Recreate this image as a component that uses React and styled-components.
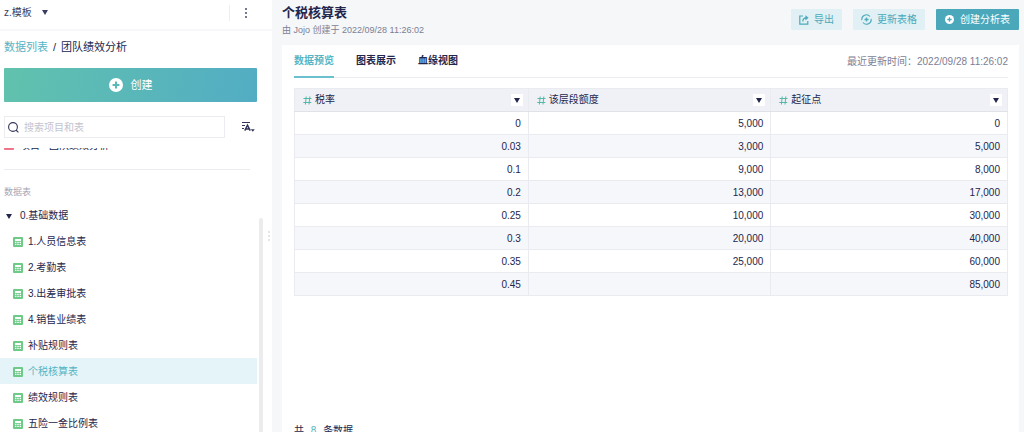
import React, { useState } from "react";
import styled, { createGlobalStyle } from "styled-components";

const GlobalStyle = createGlobalStyle`
  * {
    box-sizing: border-box;
  }
  body {
    margin: 0;
    background: #ffffff;
    color: #23264d;
    font-family: "Liberation Sans", "Noto Sans CJK SC", sans-serif;
    font-size: 10px;
    line-height: 16px;
  }
  button,
  input {
    font-family: inherit;
    font-size: inherit;
    line-height: inherit;
    color: inherit;
    border: none;
    padding: 0;
    background: none;
  }
  a {
    color: inherit;
    text-decoration: none;
  }
  svg {
    display: block;
    flex: none;
  }
`;

const Page = styled.div`
  display: grid;
  grid-template-columns: 264px 8px 1fr;
  height: 100vh;
  overflow: hidden;
`;

const Sidebar = styled.aside`
  display: flex;
  flex-direction: column;
  min-height: 0;
`;

const TopBar = styled.div`
  display: flex;
  align-items: center;
  justify-content: space-between;
  height: 31px;
  margin-right: -8px;
  padding: 0 24px 4px 4px;
  border-bottom: 2px solid #f7f7f9;
`;

const ProjectButton = styled.button`
  display: flex;
  align-items: center;
  gap: 10px;
  color: #3b3e60;
`;

const MoreButton = styled.button`
  display: flex;
  align-items: center;
  height: 16px;
  padding-left: 14px;
  border-left: 1px solid #eeeef2;
`;

const Breadcrumb = styled.nav`
  display: flex;
  gap: 5px;
  padding: 8px 4px;
  font-size: 11px;

  a {
    color: #55b3c5;
  }
`;

const CreateButton = styled.button`
  display: flex;
  align-items: center;
  justify-content: center;
  gap: 8px;
  height: 34px;
  margin: 5px 7px 0 4px;
  border-radius: 1px;
  color: #ffffff;
  font-size: 11px;
  background: linear-gradient(100deg, #61c2ad, #52adc4);
`;

const SearchRow = styled.div`
  display: flex;
  align-items: center;
  gap: 16px;
  padding: 14px 9px 10px 4px;
`;

const SearchBox = styled.label`
  display: flex;
  flex: 1;
  align-items: center;
  gap: 5px;
  height: 22px;
  padding: 1px 3px 0;
  border: 1px solid #ececf0;

  input {
    flex: 1;
    min-width: 0;
    outline: none;
  }
  input::placeholder {
    color: #c3c4cf;
  }
`;

const Scroller = styled.div`
  display: flex;
  flex: 1;
  flex-direction: column;
  min-height: 0;
  overflow: hidden;
`;

const Projects = styled.div`
  display: flex;
  align-items: flex-end;
  flex: none;
  height: 3px;
  overflow: hidden;
  padding-left: 4px;
`;

const ProjectLink = styled.a`
  display: flex;
  align-items: center;
  gap: 6px;
  line-height: 10px;
`;

const Divider = styled.hr`
  width: calc(100% - 18px);
  margin: 18px 0 0 4px;
  border: none;
  border-top: 1px solid #ececf0;
`;

const TreeArea = styled.div`
  display: flex;
  flex: 1;
  min-height: 0;
  justify-content: space-between;
`;

const Tree = styled.div`
  flex: 1;
  min-width: 0;
`;

const TreeLabel = styled.div`
  padding: 14px 4px 2px;
  font-size: 9px;
  color: #a5a6b6;
`;

const GroupButton = styled.button`
  display: flex;
  align-items: center;
  gap: 8px;
  width: 100%;
  height: 26px;
  padding: 2px 0 0 6px;
`;

const TreeItem = styled.a`
  display: flex;
  align-items: center;
  gap: 5px;
  height: 26px;
  padding: 1px 0 0 13px;
  color: ${(props) => (props.$active ? "#55b5c5" : "#23264d")};
  background: ${(props) => (props.$active ? "#e5f4f8" : "none")};
`;

const ScrollTrack = styled.div`
  width: 7px;
  padding: 48px 1px 0 2px;
`;

const ScrollThumb = styled.div`
  height: 100%;
  border-radius: 2px 2px 0 0;
  background: #ececee;
`;

const Resizer = styled.div`
  display: flex;
  align-items: center;
  justify-content: flex-end;
  padding: 40px 1px 0 0;
`;

const Main = styled.main`
  display: flex;
  flex-direction: column;
  min-width: 0;
  min-height: 0;
  padding: 4px 5px 0 10px;
  background: #f5f7f9;
`;

const Header = styled.header`
  display: flex;
  align-items: flex-start;
  justify-content: space-between;
  height: 41px;
`;

const Title = styled.h1`
  margin: 0;
  font-size: 13px;
  font-weight: 700;
  line-height: 18px;
`;

const Subtitle = styled.p`
  margin: 0;
  font-size: 9px;
  color: #7c7e95;
`;

const Actions = styled.div`
  display: flex;
  gap: 11px;
  padding-top: 5px;
`;

const ActionButton = styled.button`
  display: flex;
  align-items: center;
  gap: ${(props) => (props.$primary ? "6px" : "5px")};
  height: 21px;
  padding: 0 ${(props) => (props.$primary ? "9px" : "8px")};
  border-radius: 1px;
  color: ${(props) => (props.$primary ? "#ffffff" : "#4ba9bb")};
  background: ${(props) => (props.$primary ? "#4ba8bb" : "#e0f0f4")};
`;

const Panel = styled.section`
  display: flex;
  flex: 1;
  flex-direction: column;
  min-height: 0;
  padding: 0 11px 0 12px;
  background: #ffffff;
`;

const TabBar = styled.div`
  display: flex;
  align-items: center;
  justify-content: space-between;
  height: 33px;
  border-bottom: 1px solid #ededf1;
`;

const Tabs = styled.div`
  display: flex;
  gap: 22px;
`;

const Tab = styled.button`
  height: 33px;
  padding-top: 2px;
  font-weight: 700;
  color: ${(props) => (props.$active ? "#55b5c5" : "#23264d")};
  border-bottom: 2px solid ${(props) => (props.$active ? "#6bc0cd" : "transparent")};
`;

const Updated = styled.span`
  padding-top: 2px;
  color: #7c7e95;
`;

const Table = styled.table`
  width: 100%;
  margin-top: 10px;
  border-collapse: collapse;
  table-layout: fixed;

  th,
  td {
    border: 1px solid #e9ebf0;
  }
  th {
    height: 23px;
    padding: 0 5px 0 8px;
    font-weight: 400;
    background: #f0f1f6;
    border-bottom-color: #e0e2e8;
  }
  td {
    height: 23px;
    padding: 1px 7px 0;
    text-align: right;
  }
  tbody tr:nth-child(even) {
    background: #f6f7fa;
  }
`;

const ColumnHead = styled.div`
  display: flex;
  align-items: center;
  gap: 3px;
`;

const FilterButton = styled.button`
  display: flex;
  align-items: center;
  justify-content: center;
  width: 12px;
  height: 12px;
  margin-left: auto;
  background: #ffffff;
`;

const Footer = styled.footer`
  flex: none;
  margin-top: auto;
  height: 9px;

  span {
    margin: 0 4px;
    color: #55b5c5;
  }
`;

const Caret = () => (
  <svg width="6" height="5" viewBox="0 0 6 5" fill="currentColor">
    <path d="M0 0h6L3 5z" />
  </svg>
);

const DotsIcon = ({ color = "#4a4d6c", r = 1 }) => (
  <svg width="4" height="10" viewBox="0 0 4 10" fill={color}>
    <circle cx="2" cy="1" r={r} />
    <circle cx="2" cy="5" r={r} />
    <circle cx="2" cy="9" r={r} />
  </svg>
);

const PlusCircle = ({ size, color }) => (
  <svg width={size} height={size} viewBox="0 0 14 14">
    <circle cx="7" cy="7" r="7" fill="#fff" />
    <path d="M7 3.6v6.8M3.6 7h6.8" stroke={color} strokeWidth="2" />
  </svg>
);

const SearchIcon = () => (
  <svg width="11" height="11" viewBox="0 0 11 11" fill="none" stroke="#33365a" strokeWidth="1.1">
    <circle cx="5" cy="5" r="4.4" />
    <path d="M8 8l2.4 2.4" />
  </svg>
);

const SortIcon = () => (
  <svg width="14" height="12" viewBox="0 0 14 12" fill="none" stroke="#33365a">
    <path d="M1 1.5h8M1 4.5h3M1 7.5h2" strokeWidth="1" />
    <path d="M3.8 9.6L6.5 4.2L9.2 9.6M4.6 8h3.8" strokeWidth="1.5" />
    <path d="M9.8 8.2h4l-2 2.6z" fill="#33365a" stroke="none" />
  </svg>
);

const ProjectIcon = () => (
  <svg width="10" height="10" viewBox="0 0 10 10">
    <rect width="10" height="9" rx="1" fill="#ee7489" />
  </svg>
);

const SheetIcon = () => (
  <svg width="10" height="10" viewBox="0 0 10 10">
    <rect width="10" height="10" rx="1" fill="#6ccb87" />
    <path d="M2 2h6v2H2z" fill="#fff" />
    <path d="M2 4.8h1.4V6H2zM4.3 4.8h1.4V6H4.3zM6.6 4.8H8V6H6.6zM2 6.8h1.4V8H2zM4.3 6.8h1.4V8H4.3zM6.6 6.8H8V8H6.6z" fill="#fff" />
  </svg>
);

const ExportIcon = () => (
  <svg width="10" height="10" viewBox="0 0 10 10" fill="none" stroke="currentColor" strokeWidth="1.2">
    <path d="M4 1H.8v8.2h8V6" />
    <path d="M3.8 6.6c0-2.6 1.2-3.8 3.6-3.8" />
    <path d="M6.4.2l3.2 2.6-3.2 2.6z" fill="currentColor" stroke="none" />
  </svg>
);

const RefreshIcon = () => (
  <svg width="11" height="11" viewBox="0 0 11 11" fill="none" stroke="currentColor" strokeWidth="1.1">
    <path d="M.9 6.2A4.6 4.6 0 0 1 9 2.5M10.1 4.8A4.6 4.6 0 0 1 2 8.5" />
    <path d="M5.5 3.5v4M3.5 5.5h4" strokeWidth="1.3" />
  </svg>
);

const HashIcon = () => (
  <svg width="9" height="9" viewBox="0 0 9 9" fill="none" stroke="#55b8a8" strokeWidth="1">
    <path d="M3.2.5l-.8 8M6.8.5L6 8.5M.5 2.5h8M.3 6.5h8" />
  </svg>
);

const sheets = [
  "1.人员信息表",
  "2.考勤表",
  "3.出差审批表",
  "4.销售业绩表",
  "补贴规则表",
  "个税核算表",
  "绩效规则表",
  "五险一金比例表",
];

const tabs = ["数据预览", "图表展示", "血缘视图"];

const columns = [
  { name: "税率", width: "32.8%" },
  { name: "该层段额度", width: "34%" },
  { name: "起征点", width: "33.2%" },
];

const rows = [
  ["0", "5,000", "0"],
  ["0.03", "3,000", "5,000"],
  ["0.1", "9,000", "8,000"],
  ["0.2", "13,000", "17,000"],
  ["0.25", "10,000", "30,000"],
  ["0.3", "20,000", "40,000"],
  ["0.35", "25,000", "60,000"],
  ["0.45", "", "85,000"],
];

const App = () => {
  const [sheet, setSheet] = useState("个税核算表");
  const [tab, setTab] = useState("数据预览");
  const [query, setQuery] = useState("");

  return (
    <Page>
      <GlobalStyle />
      <Sidebar>
        <TopBar>
          <ProjectButton>
            z.模板
            <Caret />
          </ProjectButton>
          <MoreButton aria-label="更多">
            <DotsIcon />
          </MoreButton>
        </TopBar>
        <Breadcrumb>
          <a href="#list">数据列表</a>
          <span>/</span>
          <span>团队绩效分析</span>
        </Breadcrumb>
        <CreateButton>
          <PlusCircle size={14} color="#59b8b8" />
          创建
        </CreateButton>
        <SearchRow>
          <SearchBox>
            <SearchIcon />
            <input
              type="text"
              aria-label="搜索项目和表"
              placeholder="搜索项目和表"
              value={query}
              onChange={(event) => setQuery(event.target.value)}
            />
          </SearchBox>
          <button aria-label="排序">
            <SortIcon />
          </button>
        </SearchRow>
        <Scroller>
          <Projects>
            <ProjectLink href="#project">
              <ProjectIcon />
              项目 - 团队绩效分析
            </ProjectLink>
          </Projects>
          <Divider />
          <TreeArea>
            <Tree>
              <TreeLabel>数据表</TreeLabel>
              <GroupButton>
                <Caret />
                0.基础数据
              </GroupButton>
              {sheets.map((name) => (
                <TreeItem
                  key={name}
                  href="#sheet"
                  $active={name === sheet}
                  onClick={() => setSheet(name)}
                >
                  <SheetIcon />
                  {name}
                </TreeItem>
              ))}
            </Tree>
            <ScrollTrack>
              <ScrollThumb />
            </ScrollTrack>
          </TreeArea>
        </Scroller>
      </Sidebar>
      <Resizer>
        <DotsIcon color="#b9bac6" r={0.7} />
      </Resizer>
      <Main>
        <Header>
          <div>
            <Title>个税核算表</Title>
            <Subtitle>由 Jojo 创建于 2022/09/28 11:26:02</Subtitle>
          </div>
          <Actions>
            <ActionButton>
              <ExportIcon />
              导出
            </ActionButton>
            <ActionButton>
              <RefreshIcon />
              更新表格
            </ActionButton>
            <ActionButton $primary>
              <PlusCircle size={9} color="#4ba8bb" />
              创建分析表
            </ActionButton>
          </Actions>
        </Header>
        <Panel>
          <TabBar>
            <Tabs>
              {tabs.map((name) => (
                <Tab key={name} $active={name === tab} onClick={() => setTab(name)}>
                  {name}
                </Tab>
              ))}
            </Tabs>
            <Updated>最近更新时间：2022/09/28 11:26:02</Updated>
          </TabBar>
          <Table>
            <colgroup>
              {columns.map((column) => (
                <col key={column.name} style={{ width: column.width }} />
              ))}
            </colgroup>
            <thead>
              <tr>
                {columns.map((column) => (
                  <th key={column.name}>
                    <ColumnHead>
                      <HashIcon />
                      {column.name}
                      <FilterButton aria-label="筛选">
                        <Caret />
                      </FilterButton>
                    </ColumnHead>
                  </th>
                ))}
              </tr>
            </thead>
            <tbody>
              {rows.map((row) => (
                <tr key={row[0]}>
                  {row.map((value, index) => (
                    <td key={index}>{value}</td>
                  ))}
                </tr>
              ))}
            </tbody>
          </Table>
          <Footer>
            共<span> 8 </span>条数据
          </Footer>
        </Panel>
      </Main>
    </Page>
  );
};

export default App;
